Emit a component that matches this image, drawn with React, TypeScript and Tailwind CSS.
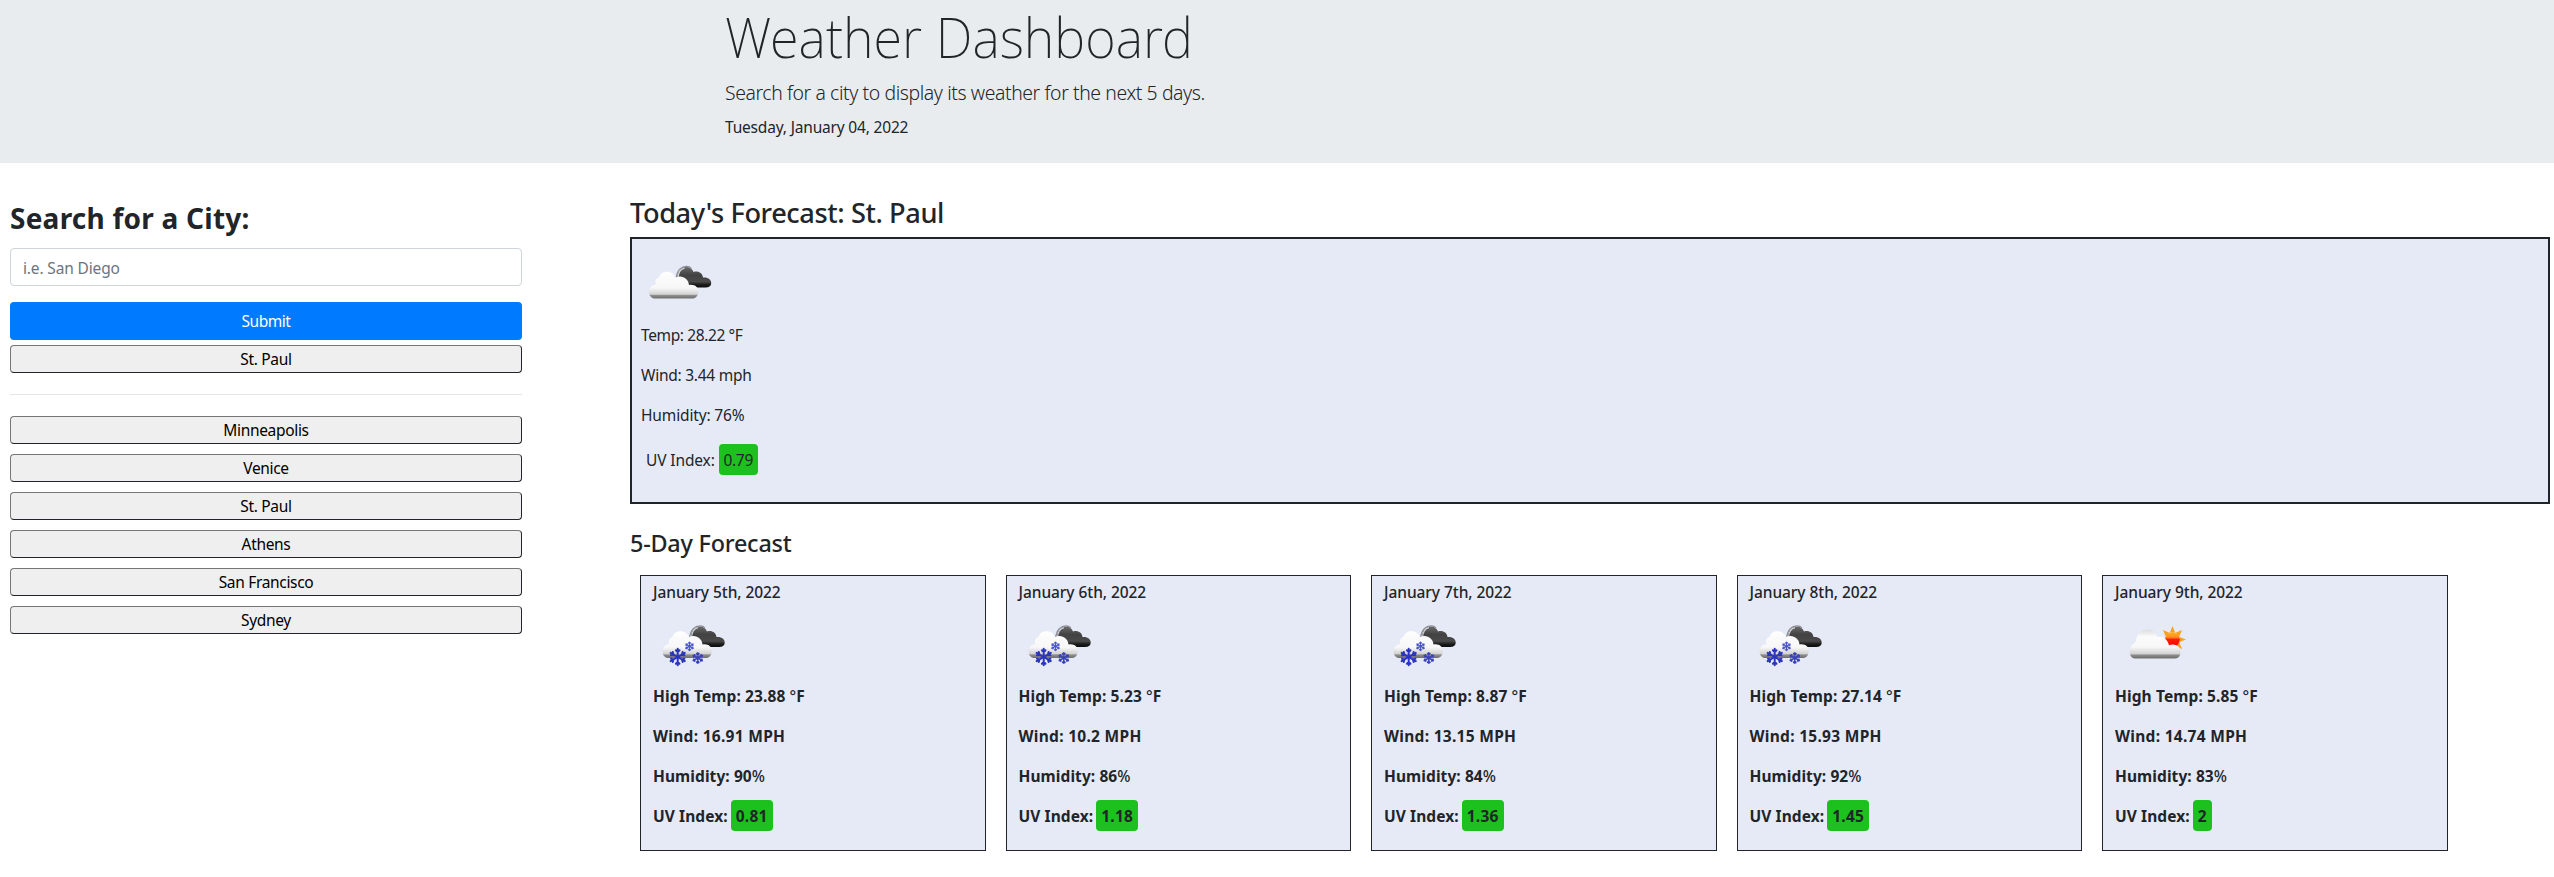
import React from "react";

type Sky = "cloudy" | "snow" | "sunny";

const cities = ["Minneapolis", "Venice", "St. Paul", "Athens", "San Francisco", "Sydney"];

const days: { date: string; sky: Sky; temp: string; wind: string; humidity: string; uv: string }[] = [
  { date: "January 5th, 2022", sky: "snow", temp: "23.88", wind: "16.91", humidity: "90", uv: "0.81" },
  { date: "January 6th, 2022", sky: "snow", temp: "5.23", wind: "10.2", humidity: "86", uv: "1.18" },
  { date: "January 7th, 2022", sky: "snow", temp: "8.87", wind: "13.15", humidity: "84", uv: "1.36" },
  { date: "January 8th, 2022", sky: "snow", temp: "27.14", wind: "15.93", humidity: "92", uv: "1.45" },
  { date: "January 9th, 2022", sky: "sunny", temp: "5.85", wind: "14.74", humidity: "83", uv: "2" },
];

function Flake({ x, y, r, w, color }: { x: number; y: number; r: number; w: number; color: string }) {
  return (
    <g transform={`translate(${x} ${y})`} stroke={color} strokeWidth={w} strokeLinecap="round" fill="none">
      {[0, 60, 120, 180, 240, 300].map((a) => (
        <path
          key={a}
          transform={`rotate(${a})`}
          d={`M0 0 V${-r} M${-r * 0.22} ${-r * 0.82} L0 ${-r * 0.6} L${r * 0.22} ${-r * 0.82}`}
        />
      ))}
    </g>
  );
}

function WeatherIcon({ sky }: { sky: Sky }) {
  const id = React.useId();
  return (
    <svg width="100" height="70" viewBox="0 0 100 70" className="block" aria-hidden="true">
      <defs>
        <linearGradient id={id + "l"} x1="0" y1="0" x2="0" y2="1">
          <stop offset="0" stopColor={sky === "sunny" ? "#dcdcdc" : "#ffffff"} />
          <stop offset="0.25" stopColor="#fbfbfb" />
          <stop offset="0.6" stopColor="#f7f7f7" />
          <stop offset="0.84" stopColor="#d2d2d2" />
          <stop offset="0.88" stopColor="#8e8e8e" />
          <stop offset="1" stopColor="#6c6c6c" />
        </linearGradient>
        <linearGradient id={id + "d"} x1="0" y1="0" x2="0" y2="1">
          <stop offset="0" stopColor="#6a6a6a" />
          <stop offset="0.4" stopColor="#424242" />
          <stop offset="0.72" stopColor="#4a4a4a" />
          <stop offset="0.86" stopColor="#1c1c1c" />
          <stop offset="1" stopColor="#0c0c0c" />
        </linearGradient>
        <linearGradient id={id + "s"} x1="0" y1="0" x2="0" y2="1">
          <stop offset="0" stopColor="#ffb524" />
          <stop offset="0.35" stopColor="#ff8a1c" />
          <stop offset="0.5" stopColor="#ff1c08" />
          <stop offset="1" stopColor="#ff0000" />
        </linearGradient>
      </defs>
      {sky === "sunny" ? (
        <>
          <g fill="#f9a11f">
            {[0, 45, 90, 135, 315].map((a) => (
              <path key={a} transform={`translate(60.5 29.5) rotate(${a})`} d="M0 -13.5 L2.6 -7 H-2.6 Z" />
            ))}
          </g>
          <circle cx="60.5" cy="29.5" r="7.4" fill={`url(#${id}s)`} />
          <path
            fill={`url(#${id}l)`}
            d="M23 48.5 C19.5 48.5 17.8 45.5 17.8 41.5 C17.8 37 20.5 34 24 31.5 C24.5 24 28 19.5 35 19.5 C40.5 19.5 43.500 22 45 26.5 C51 26 55.5 29 57 35.2 C63 33 68.5 36.5 68.5 41.5 C68.5 45.5 67 48.5 63 48.5 Z"
          />
        </>
      ) : (
        <g transform={sky === "snow" ? "translate(-6.5 -0.5)" : undefined}>
          <path
            fill={`url(#${id}d)`}
            d="M47 33 C46.5 22 50.5 17 56 17 C60 17 62.5 19 63.5 22 C68 20.5 72.5 23 73 27.5 C78 27 81.2 29.5 81.2 33 C81.2 36 79 37.4 76 37.4 L55 37.4 Z"
          />
          <path fill="none" stroke="#8b8d93" strokeWidth="1.2" d="M46.2 28 C47 20 51.5 16.3 56.5 16.3 C58.8 16.3 60.5 17.2 61.5 18.5" />
          <path fill="none" stroke="#d3d4d8" strokeWidth="1.2" d="M48 28 C48.3 22.5 51 19 54.5 18.2" />
          <path
            fill={`url(#${id}l)`}
            d="M25 48.6 C21.5 48.6 19 45.5 19 42 C19 37.5 22 35 25.8 34.5 C24.8 31 26 28.2 29 27.5 C30 23.5 33 21.7 37 21.7 C41 21.7 44.2 24 45.5 27.5 C52 24.5 58.5 28.5 59 35 C64.5 34 68.3 37 68.3 41.5 C68.3 45.5 66 48.6 62 48.6 Z"
          />
        </g>
      )}
      {sky === "snow" && (
        <>
          <Flake x={27.7} y={47} r={8.2} w={2} color="#2a34bc" />
          <Flake x={39.5} y={36.3} r={4.2} w={1.3} color="#4a55d0" />
          <Flake x={47.8} y={48} r={5.3} w={1.5} color="#3a42b8" />
        </>
      )}
    </svg>
  );
}

function CityButton({ name, className = "" }: { name: string; className?: string }) {
  return (
    <button
      className={
        "block h-7 w-full rounded-[4px] border border-t-[#767676] border-l-[#767676] border-r-[#212529] border-b-[#212529] bg-[#efefef] text-center text-[15.5px] leading-[26px] tracking-[-0.33px] text-black " +
        className
      }
    >
      {name}
    </button>
  );
}

export default function App() {
  return (
    <div className="min-h-[877px] w-full bg-white font-['Noto_Sans','Open_Sans',sans-serif] text-[15.5px] leading-6 text-[#212529]">
      <header className="h-[163px] bg-[#e8ecef] pl-[725px] pt-[3px]">
        <h1 className="w-max origin-left scale-x-[0.952] whitespace-nowrap text-[55px] font-extralight leading-[67px]">
          Weather Dashboard
        </h1>
        <p className="mt-2 whitespace-nowrap text-[19.4px] font-light leading-[30px] tracking-[-0.4px]">
          Search for a city to display its weather for the next 5 days.
        </p>
        <p className="mt-[7px] tracking-[-0.18px]">Tuesday, January 04, 2022</p>
      </header>

      <div className="flex">
        <aside className="ml-[10px] w-[512px] pt-[38px]">
          <h2 className="text-[28px] font-bold leading-[34px] tracking-[0.24px]">Search for a City:</h2>
          <input
            className="mt-[13px] block h-[38px] w-full rounded-[4px] border border-[#ced4da] bg-white px-3 pt-[2px] tracking-[-0.15px] outline-none placeholder:text-[#6c757d]"
            placeholder="i.e. San Diego"
          />
          <button className="mt-4 block h-[38px] w-full rounded-[4px] bg-[#007bff] text-center tracking-[-0.45px] text-white">
            Submit
          </button>
          <CityButton name="St. Paul" className="mt-[5px]" />
          <hr className="mb-[21px] mt-[21px] border-t border-[#e5e5e5]" />
          <div className="flex flex-col gap-[10px]">
            {cities.map((c) => (
              <CityButton key={c} name={c} />
            ))}
          </div>
        </aside>

        <main className="ml-[108px] w-[1920px] pt-[33px]">
          <h2 className="text-[27.2px] font-medium leading-[34px] tracking-[-0.41px]">Today's Forecast: St. Paul</h2>
          <section className="mt-[7px] h-[267px] border-2 border-[#212529] bg-[#e6eaf7] pl-[9px]">
            <div className="-ml-[11px] h-[84px] pt-[11px]">
              <WeatherIcon sky="cloudy" />
            </div>
            <p className="mb-4 tracking-[-0.38px]">Temp: 28.22 °F</p>
            <p className="mb-4 tracking-[-0.25px]">Wind: 3.44 mph</p>
            <p className="tracking-[-0.14px]">Humidity: 76%</p>
            <div className="mt-[17px] flex h-[31px] items-center pl-[5px]">
              <span className="mr-[4px] tracking-[-0.12px]">UV Index:</span>
              <span className="h-[31px] w-[39px] rounded-[4px] bg-[#1dc11d] text-center leading-[32px] tracking-[-0.3px]">0.79</span>
            </div>
          </section>

          <h3 className="mt-[25px] text-[23.4px] font-medium leading-[29px] tracking-[-0.217px]">5-Day Forecast</h3>
          <div className="ml-[10px] mt-[17px] flex gap-5">
            {days.map((d) => (
              <article key={d.date} className="h-[276px] w-[345.5px] shrink-0 border border-[#212529] bg-[#e6eaf7] pl-3 pt-1">
                <p className="font-medium tracking-[-0.06px]">{d.date}</p>
                <div className="-ml-[3px] h-[80px] pt-[6px]">
                  <WeatherIcon sky={d.sky} />
                </div>
                <p className="mb-4 font-bold tracking-[0.11px]">
                  High Temp: {d.temp} <span className="font-medium">°</span>F
                </p>
                <p className="mb-4 font-bold tracking-[0.29px]">Wind: {d.wind} MPH</p>
                <p className="font-bold tracking-[0.08px]">
                  Humidity: {d.humidity}
                  <span className="font-medium">%</span>
                </p>
                <div className="mt-3 flex h-[31px] items-center font-bold">
                  <span className="mr-[3px] tracking-[0.08px]">UV Index:</span>
                  <span className="h-[31px] rounded-[4px] bg-[#1dc11d] px-[5px] text-center leading-[32px] tracking-[0.25px]">{d.uv}</span>
                </div>
              </article>
            ))}
          </div>
        </main>
      </div>
    </div>
  );
}
